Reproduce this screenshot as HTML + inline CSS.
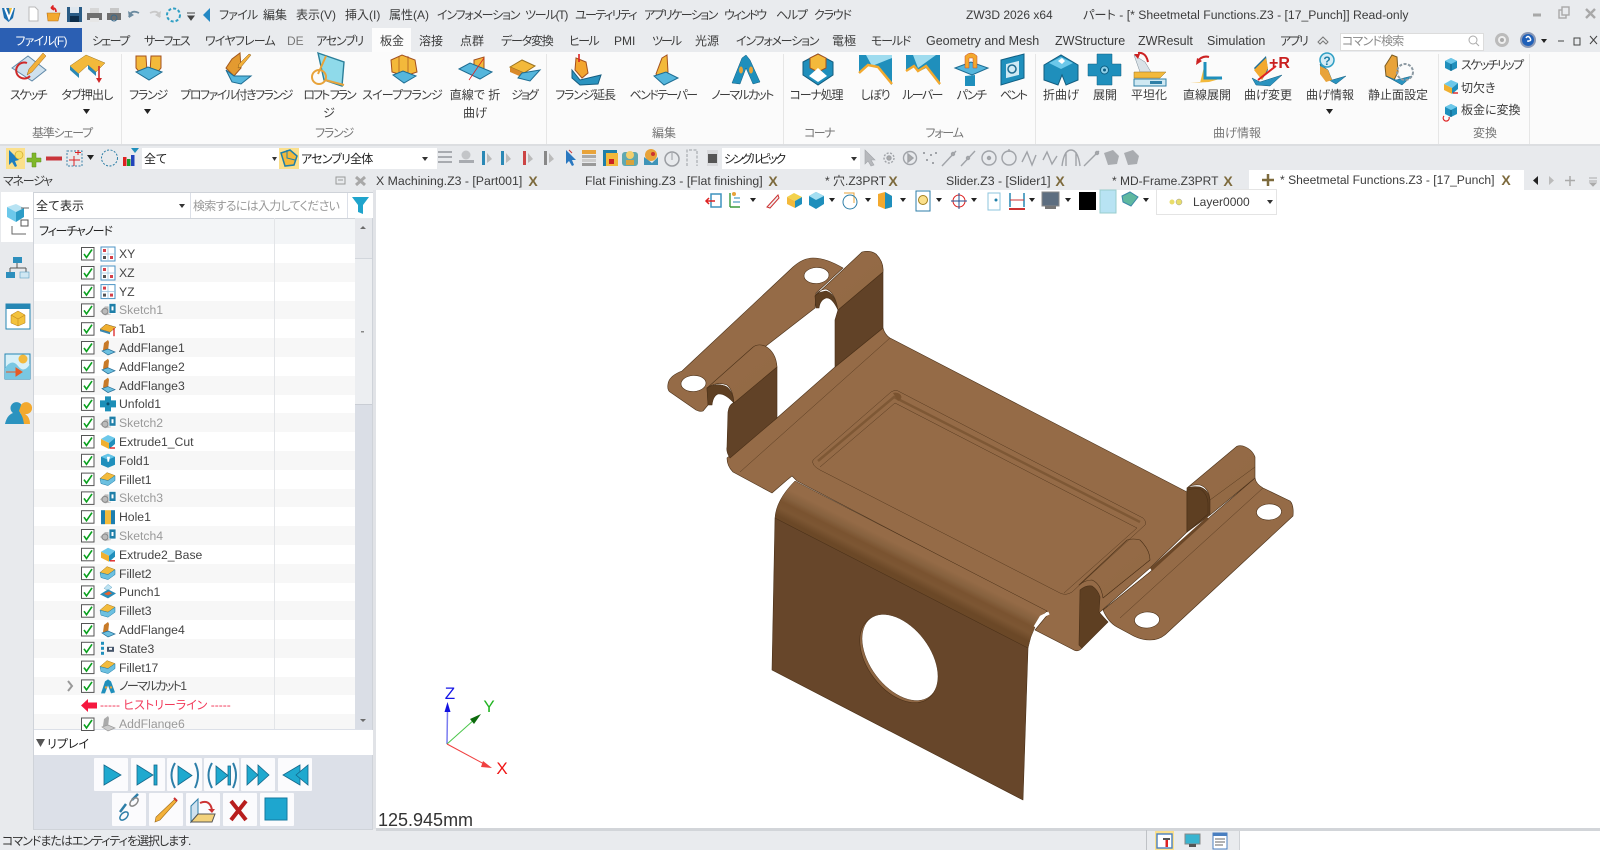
<!DOCTYPE html>
<html lang="ja"><head><meta charset="utf-8"><title>ZW3D</title>
<style>
html,body{margin:0;padding:0}
body{width:1600px;height:850px;position:relative;overflow:hidden;background:#e8eaed;font-family:"Liberation Sans","Noto Sans CJK JP",sans-serif;font-size:12px;color:#3c3c3c;font-feature-settings:"palt"}
.b{position:absolute}
.c,.l{position:absolute;white-space:nowrap;line-height:1}
.c{transform:translate(-50%,-50%)}
.l{transform:translateY(-50%)}
.g{color:#777}
.x{font-weight:bold;color:#7d6a3c;font-size:14px}
.r{position:absolute;left:34px;width:321px;height:18.8px}
.n{position:absolute;left:119px;white-space:nowrap;line-height:1;transform:translateY(-50%);font-size:12.2px;color:#444}
.d{color:#9a9a9a}
.bt{position:absolute;background:#fbfbfd;border-radius:1px}
.k1{letter-spacing:-.8px}.k2{letter-spacing:-1.2px}.k3{letter-spacing:-1.6px}.k4{letter-spacing:-2px}
svg{position:absolute;left:0;top:0;overflow:visible}
</style></head><body>

<!-- backgrounds -->
<div class="b" style="left:0;top:0;width:1600px;height:52px;background:#e9ebee"></div>
<div class="b" style="left:0;top:28px;width:82px;height:24px;background:#2b5fb3"></div>
<div class="b" style="left:372px;top:28px;width:39px;height:25px;background:#fcfcfc"></div>
<div class="b" style="left:0;top:52px;width:1600px;height:92px;background:#fbfbfb"></div>
<div class="b" style="left:0;top:144px;width:1600px;height:2px;background:#dcdee1"></div>
<div class="b" style="left:121px;top:54px;width:1px;height:90px;background:#e6e6e6"></div>
<div class="b" style="left:546px;top:54px;width:1px;height:90px;background:#e6e6e6"></div>
<div class="b" style="left:783px;top:54px;width:1px;height:90px;background:#e6e6e6"></div>
<div class="b" style="left:1035px;top:54px;width:1px;height:90px;background:#e6e6e6"></div>
<div class="b" style="left:1438px;top:54px;width:1px;height:90px;background:#e6e6e6"></div>
<div class="b" style="left:1529px;top:54px;width:1px;height:90px;background:#e6e6e6"></div>
<div class="b" style="left:1340px;top:33px;width:144px;height:18px;background:#fff;border:1px solid #dcdcdc;box-sizing:border-box"></div>

<!-- toolbar combos -->
<div class="b" style="left:6px;top:148px;width:19px;height:21px;background:#fbe08c"></div>
<div class="b" style="left:142px;top:148px;width:137px;height:21px;background:#fff"></div>
<div class="b" style="left:279px;top:148px;width:20px;height:21px;background:#fbe08c"></div>
<div class="b" style="left:299px;top:148px;width:138px;height:21px;background:#fff"></div>
<div class="b" style="left:722px;top:148px;width:138px;height:21px;background:#fff"></div>

<!-- viewport -->
<div class="b" style="left:376px;top:190px;width:1224px;height:639px;background:#fff"></div>
<div class="b" style="left:373px;top:190px;width:3px;height:639px;background:#e1e3e7"></div>
<div class="b" style="left:1249px;top:170px;width:275px;height:22px;background:#fff"></div>
<div class="b" style="left:1156px;top:189px;width:121px;height:26px;background:#fff;border:1px solid #e4e4e4;box-sizing:border-box"></div>
<div class="b" style="left:376px;top:828px;width:1224px;height:2px;background:#d2d5d9"></div>

<!-- manager panel -->
<div class="b" style="left:1px;top:192px;width:33px;height:50px;background:#fff"></div>
<div class="b" style="left:33px;top:192px;width:340px;height:638px;background:#dce0e8;border:1px solid #cfd3d9;box-sizing:border-box"></div>
<div class="b" style="left:34px;top:193px;width:156px;height:25px;background:#fff"></div>
<div class="b" style="left:191px;top:193px;width:156px;height:25px;background:#fff"></div>
<div class="b" style="left:348px;top:193px;width:25px;height:25px;background:#fff"></div>
<div class="b" style="left:34px;top:218px;width:321px;height:26px;background:#f3f5f7;border-top:1px solid #cfd3d9;box-sizing:border-box"></div>
<div class="b" style="left:34px;top:244px;width:321px;height:485px;background:#fff;overflow:hidden">
<div class="r" style="left:0;top:19px;background:#f7f7f7"></div>
<div class="r" style="left:0;top:56.6px;background:#f7f7f7"></div>
<div class="r" style="left:0;top:94.2px;background:#f7f7f7"></div>
<div class="r" style="left:0;top:131.8px;background:#f7f7f7"></div>
<div class="r" style="left:0;top:169.4px;background:#f7f7f7"></div>
<div class="r" style="left:0;top:207px;background:#f7f7f7"></div>
<div class="r" style="left:0;top:244.6px;background:#f7f7f7"></div>
<div class="r" style="left:0;top:282.2px;background:#f7f7f7"></div>
<div class="r" style="left:0;top:319.8px;background:#f7f7f7"></div>
<div class="r" style="left:0;top:357.4px;background:#f7f7f7"></div>
<div class="r" style="left:0;top:395px;background:#f7f7f7"></div>
<div class="r" style="left:0;top:432.6px;background:#f7f7f7"></div>
<div class="r" style="left:0;top:470.2px;background:#f7f7f7"></div>
</div>
<div class="b" style="left:274px;top:218px;width:1px;height:511px;background:#e3e5e8"></div>
<div class="b" style="left:355px;top:218px;width:17px;height:40px;background:#e6e8ec"></div>
<div class="b" style="left:355px;top:258px;width:17px;height:147px;background:#eceef1;border-top:1px solid #d2d6dc;border-bottom:1px solid #c9cdd4;box-sizing:border-box"></div>
<div class="b" style="left:355px;top:405px;width:17px;height:324px;background:#dadee6"></div>
<div class="b" style="left:34px;top:730px;width:339px;height:25px;background:#fff"></div>
<div class="bt" style="left:94px;top:758px;width:34px;height:33px"></div>
<div class="bt" style="left:131px;top:758px;width:34px;height:33px"></div>
<div class="bt" style="left:167px;top:758px;width:35px;height:33px"></div>
<div class="bt" style="left:204px;top:758px;width:35px;height:33px"></div>
<div class="bt" style="left:241px;top:758px;width:34px;height:33px"></div>
<div class="bt" style="left:278px;top:758px;width:34px;height:33px"></div>
<div class="bt" style="left:112px;top:793px;width:34px;height:33px"></div>
<div class="bt" style="left:149px;top:793px;width:34px;height:33px"></div>
<div class="bt" style="left:186px;top:793px;width:34px;height:33px"></div>
<div class="bt" style="left:223px;top:793px;width:34px;height:33px"></div>
<div class="bt" style="left:260px;top:793px;width:34px;height:33px"></div>

<!-- status bar -->
<div class="b" style="left:0;top:830px;width:1600px;height:20px;background:#e9ebee"></div>
<div class="b" style="left:376px;top:830px;width:1224px;height:1px;background:#d2d5d9"></div>
<div class="b" style="left:1146px;top:830px;width:1px;height:20px;background:#bfc2c6"></div>
<div class="b" style="left:1155px;top:831px;width:19px;height:19px;background:#fbe08c"></div>
<div class="b" style="left:1239px;top:831px;width:361px;height:19px;background:#fff;border-left:1px solid #cfd2d6;box-sizing:border-box"></div>

<!-- title menu -->
<span class="l k1" style="left:219px;top:15px">ファイル</span>
<span class="l" style="left:263px;top:15px">編集</span>
<span class="l" style="left:296px;top:15px">表示(V)</span>
<span class="l" style="left:345px;top:15px">挿入(I)</span>
<span class="l" style="left:389px;top:15px">属性(A)</span>
<span class="l k2" style="left:437px;top:15px">インフォメーション</span>
<span class="l k2" style="left:525px;top:15px">ツール(T)</span>
<span class="l k3" style="left:575px;top:15px">ユーティリティ</span>
<span class="l k3" style="left:644px;top:15px">アプリケーション</span>
<span class="l k4" style="left:724px;top:15px">ウィンドウ</span>
<span class="l k2" style="left:776px;top:15px">ヘルプ</span>
<span class="l k2" style="left:814px;top:15px">クラウド</span>
<span class="l" style="left:966px;top:15px;font-size:12px">ZW3D 2026 x64</span>
<span class="l" style="left:1083px;top:15px;font-size:12.2px">パート - [* Sheetmetal Functions.Z3 - [17_Punch]] Read-only</span>

<!-- tabs -->
<span class="c k1" style="left:41px;top:41px;color:#fff">ファイル(F)</span>
<span class="l k3" style="left:92px;top:41px">シェープ</span>
<span class="l k3" style="left:144px;top:41px">サーフェス</span>
<span class="l k1" style="left:205px;top:41px">ワイヤフレーム</span>
<span class="l g" style="left:287px;top:41px">DE</span>
<span class="l k2" style="left:316px;top:41px">アセンブリ</span>
<span class="l" style="left:380px;top:41px">板金</span>
<span class="l" style="left:419px;top:41px">溶接</span>
<span class="l" style="left:460px;top:41px">点群</span>
<span class="l k2" style="left:501px;top:41px">データ変換</span>
<span class="l k3" style="left:569px;top:41px">ヒール</span>
<span class="l" style="left:614px;top:41px">PMI</span>
<span class="l k4" style="left:652px;top:41px">ツール</span>
<span class="l" style="left:695px;top:41px">光源</span>
<span class="l k2" style="left:736px;top:41px">インフォメーション</span>
<span class="l" style="left:832px;top:41px">電極</span>
<span class="l k2" style="left:871px;top:41px">モールド</span>
<span class="l" style="left:926px;top:41px;font-size:12.5px">Geometry and Mesh</span>
<span class="l" style="left:1055px;top:41px;font-size:12.5px">ZWStructure</span>
<span class="l" style="left:1138px;top:41px;font-size:12.5px">ZWResult</span>
<span class="l" style="left:1207px;top:41px;font-size:12.5px">Simulation</span>
<span class="l k3" style="left:1280px;top:41px">アプリ</span>
<span class="l k1" style="left:1342px;top:41px;color:#8a8a8a">コマンド検索</span>

<!-- ribbon labels -->
<span class="c k3" style="left:28px;top:95px">スケッチ</span>
<span class="c k1" style="left:87px;top:95px">タブ押出し</span>
<span class="c k2" style="left:148px;top:95px">フランジ</span>
<span class="c" style="left:236px;top:95px;letter-spacing:-1.5px">プロファイル付きフランジ</span>
<span class="c k4" style="left:329px;top:95px">ロフト フラン</span>
<span class="c" style="left:329px;top:113px">ジ</span>
<span class="c k1" style="left:402px;top:95px">スイープフランジ</span>
<span class="c" style="left:475px;top:95px">直線で 折</span>
<span class="c" style="left:475px;top:113px">曲げ</span>
<span class="c k4" style="left:524px;top:95px">ジョグ</span>
<span class="c k2" style="left:585px;top:95px">フランジ延長</span>
<span class="c k3" style="left:663px;top:95px">ベンドテーパー</span>
<span class="c k3" style="left:742px;top:95px">ノーマルカット</span>
<span class="c k2" style="left:816px;top:95px">コーナ処理</span>
<span class="c k2" style="left:875px;top:95px">しぼり</span>
<span class="c k3" style="left:922px;top:95px">ルーバー</span>
<span class="c k3" style="left:971px;top:95px">パンチ</span>
<span class="c k4" style="left:1013px;top:95px">ベント</span>
<span class="c" style="left:1061px;top:95px">折曲げ</span>
<span class="c" style="left:1105px;top:95px">展開</span>
<span class="c" style="left:1149px;top:95px">平坦化</span>
<span class="c" style="left:1207px;top:95px">直線展開</span>
<span class="c" style="left:1268px;top:95px">曲げ変更</span>
<span class="c" style="left:1330px;top:95px">曲げ情報</span>
<span class="c" style="left:1398px;top:95px">静止面設定</span>
<span class="l k3" style="left:1461px;top:65px">スケッチリップ</span>
<span class="l" style="left:1461px;top:88px">切欠き</span>
<span class="l" style="left:1461px;top:110px">板金に変換</span>
<span class="c g k2" style="left:62px;top:133px">基準シェープ</span>
<span class="c g k2" style="left:334px;top:133px">フランジ</span>
<span class="c g" style="left:664px;top:133px">編集</span>
<span class="c g k3" style="left:819px;top:133px">コーナ</span>
<span class="c g k2" style="left:944px;top:133px">フォーム</span>
<span class="c g" style="left:1237px;top:133px">曲げ情報</span>
<span class="c g" style="left:1485px;top:133px">変換</span>

<!-- toolbar combo text -->
<span class="l" style="left:144px;top:159px;color:#222">全て</span>
<span class="l k1" style="left:301px;top:159px;color:#222">アセンブリ全体</span>
<span class="l" style="left:724px;top:159px;color:#222;letter-spacing:-2.2px">シングルピック</span>

<!-- manager text -->
<span class="l k2" style="left:3px;top:181px">マネージャ</span>
<span class="l" style="left:36px;top:206px;font-feature-settings:normal;color:#222">全て表示</span>
<span class="l" style="left:193px;top:206px;color:#999;letter-spacing:-.7px">検索するには入力してください</span>
<span class="l k2" style="left:39px;top:231px;color:#222">フィーチャノード</span>
<span class="l" style="left:47px;top:744px;color:#222">リプレイ</span>
<span class="l" style="left:2px;top:841px;color:#333;letter-spacing:-1px">コマンドまたはエンティティを選択します.</span>

<!-- tree text -->
<span class="n" style="top:254px">XY</span>
<span class="n" style="top:273px">XZ</span>
<span class="n" style="top:291.6px">YZ</span>
<span class="n d" style="top:310.4px">Sketch1</span>
<span class="n" style="top:329.2px">Tab1</span>
<span class="n" style="top:348px">AddFlange1</span>
<span class="n" style="top:366.8px">AddFlange2</span>
<span class="n" style="top:385.6px">AddFlange3</span>
<span class="n" style="top:404.4px">Unfold1</span>
<span class="n d" style="top:423.2px">Sketch2</span>
<span class="n" style="top:442px">Extrude1_Cut</span>
<span class="n" style="top:460.8px">Fold1</span>
<span class="n" style="top:479.6px">Fillet1</span>
<span class="n d" style="top:498.4px">Sketch3</span>
<span class="n" style="top:517.2px">Hole1</span>
<span class="n d" style="top:536px">Sketch4</span>
<span class="n" style="top:554.8px">Extrude2_Base</span>
<span class="n" style="top:573.6px">Fillet2</span>
<span class="n" style="top:592.4px">Punch1</span>
<span class="n" style="top:611.2px">Fillet3</span>
<span class="n" style="top:630px">AddFlange4</span>
<span class="n" style="top:648.8px">State3</span>
<span class="n" style="top:667.6px">Fillet17</span>
<span class="n" style="top:686.4px;letter-spacing:-1.8px">ノーマルカット1</span>
<span class="l" style="left:100px;top:705.2px;color:#f23a5a">----- ヒストリーライン -----</span>
<div class="b" style="left:34px;top:717px;width:321px;height:12px;overflow:hidden"><span class="n d" style="left:85px;top:7px">AddFlange6</span></div>

<!-- viewport tabs -->
<span class="l" style="left:376px;top:181px;font-size:12.3px">X Machining.Z3 - [Part001]</span><span class="c x" style="left:533px;top:181px">X</span>
<span class="l" style="left:585px;top:181px;font-size:12.3px">Flat Finishing.Z3 - [Flat finishing]</span><span class="c x" style="left:773px;top:181px">X</span>
<span class="l" style="left:825px;top:181px">* 穴.Z3PRT</span><span class="c x" style="left:893px;top:181px">X</span>
<span class="l" style="left:946px;top:181px;font-size:12.3px">Slider.Z3 - [Slider1]</span><span class="c x" style="left:1060px;top:181px">X</span>
<span class="l" style="left:1112px;top:181px">* MD-Frame.Z3PRT</span><span class="c x" style="left:1228px;top:181px">X</span>
<span class="l" style="left:1280px;top:180px;font-size:12.1px">* Sheetmetal Functions.Z3 - [17_Punch]</span><span class="c x" style="left:1506px;top:180px">X</span>
<span class="l" style="left:1193px;top:202px">Layer0000</span>
<span class="l" style="left:378px;top:820px;font-size:18px;color:#333">125.945mm</span>
<svg width="1600" height="850" viewBox="0 0 1600 850" style="pointer-events:none">
<defs>
<linearGradient id="bend" gradientUnits="userSpaceOnUse" x1="815" y1="492" x2="798" y2="526">
<stop offset="0" stop-color="#956b47"/><stop offset=".25" stop-color="#956b47"/><stop offset=".45" stop-color="#87623f"/><stop offset=".62" stop-color="#7a5330"/><stop offset=".8" stop-color="#7c5633"/><stop offset="1" stop-color="#6b4827"/></linearGradient>
<linearGradient id="hump" x1="0" y1="0" x2="1" y2="1"><stop offset="0" stop-color="#956b47"/><stop offset=".7" stop-color="#936a45"/><stop offset="1" stop-color="#7a5534"/></linearGradient>
<symbol id="plane" viewBox="0 0 16 16" overflow="visible"><rect x="1" y="1" width="14" height="14" fill="#fff" stroke="#4b93c4" stroke-width="1"/><path d="M1 8H15M8 1V15" stroke="#9cc6e2" stroke-width=".8"/><rect x="3" y="3" width="3" height="3" fill="#d5404a"/><rect x="10" y="10" width="3" height="3" fill="#d5404a"/><rect x="3" y="10" width="3" height="3" fill="#555"/></symbol>
<symbol id="sk" viewBox="0 0 16 16" overflow="visible"><path d="M0 9 5 4 11 4 11 12 5 13Z" fill="#bbb"/><circle cx="5" cy="9" r="3" fill="none" stroke="#888"/><rect x="9" y="1" width="7" height="10" fill="#1f7fa8" stroke="#fff" stroke-width=".8"/><rect x="11.5" y="4" width="2" height="4" fill="#fff"/></symbol>
<symbol id="tab" viewBox="0 0 16 16" overflow="visible"><path d="M0 8 6 3 16 6 10 11Z" fill="#f0b030" stroke="#7a5a20" stroke-width=".5"/><path d="M0 8 10 11 10 13 0 10Z" fill="#3a88b0"/><path d="M14 7V15" stroke="#d22" stroke-width="1.3"/></symbol>
<symbol id="fl" viewBox="0 0 16 16" overflow="visible"><path d="M3 10 4 3 8 0 9 2 8 11Z" fill="#c87a28"/><path d="M2 11 8 9 15 12 8 15Z" fill="#6cc0e0" stroke="#276e96" stroke-width=".7"/></symbol>
<symbol id="flg" viewBox="0 0 16 16" overflow="visible"><path d="M3 10 4 3 8 0 9 2 8 11Z" fill="#aaa"/><path d="M2 11 8 9 15 12 8 15Z" fill="#ccc" stroke="#999" stroke-width=".7"/></symbol>
<symbol id="un" viewBox="0 0 16 16" overflow="visible"><path d="M5 0H11V4H16V11H11V15H5V11H0V4H5Z" fill="#1d8fb8"/><circle cx="8" cy="7.5" r="1.5" fill="#0b4e6e"/></symbol>
<symbol id="ex" viewBox="0 0 16 16" overflow="visible"><path d="M1 5 8 1 15 4 9 9Z" fill="#6cc8ea"/><path d="M1 5 9 9 9 15 1 11Z" fill="#f0b030"/><path d="M9 9 15 4 15 10 9 15Z" fill="#1f8fbc"/><path d="M10 14 15 14" stroke="#d22" stroke-width="1.4"/></symbol>
<symbol id="fo" viewBox="0 0 16 16" overflow="visible"><path d="M1 4 8 1 15 4 15 12 8 15 1 12Z" fill="#1f8fbc"/><path d="M1 4 8 7 15 4 8 1Z" fill="#66c5e8"/><path d="M7 4 10 4 9 9 7.5 9Z" fill="#fff"/></symbol>
<symbol id="fi" viewBox="0 0 16 16" overflow="visible"><path d="M0 7 7 1 15 4 8 9Z" fill="#f3bb3c" stroke="#a77a1c" stroke-width=".5"/><path d="M0 7 8 9 15 4 15 9 8 14 1 12Z" fill="#6cc0e0" stroke="#1f7ca8" stroke-width=".5"/></symbol>
<symbol id="ho" viewBox="0 0 16 16" overflow="visible"><rect x="1" y="1" width="4" height="14" fill="#1d7fb0"/><rect x="5" y="1" width="6" height="14" fill="#f3bb3c"/><rect x="11" y="1" width="4" height="14" fill="#1d7fb0"/></symbol>
<symbol id="pu" viewBox="0 0 16 16" overflow="visible"><path d="M4 4 8 0 12 3 8 6Z" fill="#bfe4f3" stroke="#6aa8c6" stroke-width=".5"/><path d="M0 10 8 5 16 9 8 14Z" fill="#2a8db8"/><path d="M4 9.5 9 7 12 9 8 11Z" fill="#e8622a"/></symbol>
<symbol id="st" viewBox="0 0 16 16" overflow="visible"><rect x="1" y="1" width="3" height="3" fill="#1f8fbc"/><rect x="1" y="6" width="3" height="3" fill="#1f8fbc"/><rect x="1" y="11" width="3" height="3" fill="#1f8fbc"/><rect x="7" y="6" width="7" height="5" fill="#44546a"/><rect x="9" y="7" width="3" height="2" fill="#fff"/></symbol>
<symbol id="nc" viewBox="0 0 16 16" overflow="visible"><path d="M1 15 5 3 8 1 11 3 15 14 11 15 8 7 5 15Z" fill="#1f8fbc"/><circle cx="6" cy="9" r="1.2" fill="#e8a33a"/><circle cx="11" cy="9" r="1.2" fill="#e8a33a"/></symbol>
<symbol id="cb" viewBox="0 0 14 14" overflow="visible"><rect x=".5" y=".5" width="12.5" height="12.5" fill="#fff" stroke="#555" stroke-width="1"/><path d="M3 7 5.5 10.5 11 2.5" fill="none" stroke="#0aa01e" stroke-width="1.6"/></symbol>
<symbol id="bi" viewBox="0 0 16 16" overflow="visible"><path d="M2 5 8 2 14 5 14 12 8 15 2 12Z" fill="#1f8fbc"/><path d="M2 5 8 8 14 5 8 2Z" fill="#6cc8ea"/><path d="M8 8V15" stroke="#0e5f84"/></symbol>
</defs>

<!-- title icons -->
<path d="M2 8H15L13 18 8.5 22 4 18Z" fill="#1c6fb0"/><path d="M5 8 9 18 13 8" fill="none" stroke="#fff" stroke-width="2"/><path d="M9 8h3l-2 6z" fill="#f3c33c"/>
<path d="M29 7H35L38 10V21H29Z" fill="#fff" stroke="#b9b9b9"/>
<path d="M47 13H60L58 21H48Z" fill="#f3a92e" stroke="#b5701a" stroke-width=".6"/><path d="M56 12 Q56 7 51 8M51 8l2.5-2.5M51 8l3 2" stroke="#d22" stroke-width="1.6" fill="none"/>
<rect x="67" y="7" width="15" height="15" fill="#2a5c86"/><rect x="70" y="7" width="9" height="6" fill="#dfe7ee"/><rect x="70" y="16" width="9" height="6" fill="#0e2e4b"/>
<rect x="87" y="13" width="15" height="7" fill="#6f6f6f"/><rect x="90" y="8" width="9" height="5" fill="#d7d7d7"/><rect x="90" y="18" width="9" height="4" fill="#e6e6e6"/>
<rect x="107" y="13" width="14" height="7" fill="#6f6f6f"/><rect x="110" y="8" width="9" height="5" fill="#c7c7c7"/><circle cx="114" cy="18" r="3" fill="none" stroke="#3c6a8a"/>
<path d="M129 17Q131 9 139 13" fill="none" stroke="#6c8ba0" stroke-width="1.8"/><path d="M128 11l1 7 5-3z" fill="#6c8ba0"/>
<path d="M160 17Q158 9 150 13" fill="none" stroke="#c9c9c9" stroke-width="1.8"/><path d="M161 11l-1 7-5-3z" fill="#c9c9c9"/>
<circle cx="173.500" cy="15" r="6.500" fill="none" stroke="#2f9fc4" stroke-width="2" stroke-dasharray="3 2"/>
<path d="M187 13h8M188 16h6l-3 4z" stroke="#444" fill="#444"/><path d="M210 8V22L203 15Z" fill="#2388c4"/>
<path d="M1533 15h8" stroke="#a8a8a8" stroke-width="3" fill="none"/><rect x="1559" y="10" width="7" height="8" fill="none" stroke="#a8a8a8" stroke-width="1.4"/><rect x="1562" y="7" width="7" height="8" fill="#e9ebee" stroke="#a8a8a8" stroke-width="1.4"/><path d="M1586 9l9 9m0-9-9 9" stroke="#a8a8a8" stroke-width="2.400"/>

<!-- top right of tab row -->
<path d="M1318 42l5-5 5 5-2 2-3-3-3 3z" fill="none" stroke="#777"/><circle cx="1473" cy="40" r="4" fill="none" stroke="#aaa"/><path d="M1476 43l3 3" stroke="#aaa"/>
<circle cx="1502" cy="40" r="7" fill="#bbb"/><circle cx="1502" cy="40" r="4" fill="#eee"/><circle cx="1502" cy="40" r="2" fill="#aaa"/>
<circle cx="1528" cy="40" r="8" fill="#8a98b5"/><circle cx="1528" cy="40" r="6" fill="#1e5fb8"/><path d="M1526 38q2-3 4 0t-2 3v1" stroke="#fff" fill="none" stroke-width="1.500"/>
<path d="M1541 39h6l-3 4z" fill="#222"/><path d="M1558 41h6" stroke="#444"/><rect x="1574" y="38" width="6" height="7" fill="none" stroke="#444"/><path d="M1590 36l7 8m0-8-7 8" stroke="#444"/>

<!-- ribbon icons -->
<g><path d="M12 68 28 56 46 70 32 81Z" fill="#cfe1ee" stroke="#5f88a8"/><path d="M27 63a8 8 0 1 0 3 13" fill="none" stroke="#cf2a2a" stroke-width="2"/><path d="M43 53 46 56 32 72 27 75 29 69Z" fill="#f3b13a" stroke="#a0661a" stroke-width=".5"/></g>
<g><path d="M70 66 86 55 105 63 96 72 88 65 78 74Z" fill="#f3b93b" stroke="#9b7320" stroke-width=".5"/><path d="M70 66 79 74 79 78 70 70Z" fill="#2a88b5"/><path d="M88 65 96 72 96 76 88 69Z" fill="#2a88b5"/><path d="M99 66V80" stroke="#cf2a2a" stroke-width="1.600"/><path d="M96 78h6l-3 5z" fill="#cf2a2a"/></g>
<g><path d="M136 56 146 56 147 72 141 74 136 68Z" fill="#f3b93b" stroke="#a3501e"/><path d="M161 56 151 56 150 72 156 74 161 68Z" fill="#f3b93b" stroke="#a3501e"/><path d="M136 72 148 67 162 72 149 80Z" fill="#55b6dc" stroke="#1d6c92"/></g>
<g><path d="M226 68 232 59 240 53 241 68 234 76Z" fill="#e39a30" stroke="#a3581e"/><path d="M226 70 234 76 251 76 241 84 232 82Z" fill="#55b6dc" stroke="#1d6c92"/><path d="M249 54 251 55 241 67 238 68 239 64Z" fill="#f3b13a" stroke="#8a5a1a" stroke-width=".5"/></g>
<g><path d="M318 53 344 62 342 86 324 80Z" fill="#8fdaea" stroke="#2b7f9a" stroke-width="1.400"/><path d="M326 56 318 74" stroke="#e8a33a" stroke-width="2"/><circle cx="319" cy="77" r="7" fill="none" stroke="#e8a33a" stroke-width="2"/><path d="M325 80 344 85" stroke="#e8a33a" stroke-width="2"/></g>
<g><path d="M391 60 402 55 415 60 417 72 405 76 392 72Z" fill="#f3b93b" stroke="#a3501e"/><path d="M399 56V74M408 56V74" stroke="#a3501e" stroke-width=".7"/><path d="M393 75 403 71 416 76 404 83Z" fill="#55b6dc" stroke="#1d6c92"/></g>
<g><path d="M474 60 484 57 484 72 474 75Z" fill="#f3b93b" stroke="#a3501e"/><path d="M459 69 470 63 492 72 480 79Z" fill="#55b6dc" stroke="#1d6c92"/><path d="M469 80 484 58" stroke="#d22" stroke-width=".8"/></g>
<g><path d="M510 67 522 60 535 66 524 73Z" fill="#f3b93b" stroke="#9b7320"/><path d="M510 67 524 73 524 78 510 72Z" fill="#d98a2a"/><path d="M522 73 540 70 530 81 518 78Z" fill="#55b6dc" stroke="#1d6c92"/></g>
<g><path d="M576 58 586 62 588 73 582 78 575 70Z" fill="#f3a52e" stroke="#a3501e"/><path d="M572 70 580 80 601 75 598 84 580 85 572 78Z" fill="#2a93bf" stroke="#165d80"/><path d="M579 54V62" stroke="#d22" stroke-width="1.600"/></g>
<g><path d="M662 58 667 55 668 72 660 78 656 74Z" fill="#f3b93b" stroke="#a3501e"/><path d="M654 76 666 72 678 78 664 85Z" fill="#55b6dc" stroke="#1d6c92"/></g>
<g><path d="M732 83 742 58 746 55 750 60 760 82 753 84 746 68 740 84Z" fill="#1f8fbc" stroke="#135c7e" stroke-width=".5"/><ellipse cx="741" cy="70" rx="2" ry="3.500" fill="#e8a33a"/><ellipse cx="751" cy="70" rx="2" ry="3.500" fill="#e8a33a"/></g>
<g><path d="M803 62 818 54 833 62 833 75 818 85 803 75Z" fill="#1f8fbc" stroke="#135c7e"/><path d="M810 58 818 54 826 58 826 68 818 72 810 68Z" fill="#f3b93b" stroke="#a3501e"/><path d="M809 76 818 68 827 76 818 82Z" fill="#fff"/></g>
<g><path d="M859 55H892V85L878 68 868 66 859 73Z" fill="#1f8fbc"/><path d="M866 55H892V58L872 66Z" fill="#9fdcef"/><path d="M859 73 868 65 878 67 892 84" fill="none" stroke="#f3a92e" stroke-width="2.500"/></g>
<g><path d="M906 55H940V85L926 68 918 72 914 67 906 71Z" fill="#1f8fbc"/><path d="M913 55H936L918 68Z" fill="#9fdcef"/><path d="M906 71 914 66 918 71 926 66 940 84" fill="none" stroke="#f3a92e" stroke-width="2.500"/></g>
<g><path d="M955 68 971 62 988 68 972 75Z" fill="#55b6dc" stroke="#1d6c92"/><path d="M965 76V86H975V75Z" fill="#1f8fbc"/><path d="M965 56Q971 50 977 56V68H973V58H969V68H965Z" fill="#f3a92e" stroke="#c9492a" stroke-width=".5"/></g>
<g><path d="M1001 60 1024 54V78L1001 85Z" fill="#1f8fbc" stroke="#0e5f84"/><rect x="1006" y="62" width="13" height="14" fill="#cfeaf4" transform="skewY(-14) translate(0,253)"/><circle cx="1012" cy="69" r="4" fill="none" stroke="#1d6c92" stroke-width="1.500"/></g>
<g><path d="M1044 65 1061 55 1078 65 1078 80 1066 85 1062 75 1058 85 1044 80Z" fill="#1f8fbc" stroke="#135c7e"/><path d="M1049 63 1061 57 1073 63 1061 69Z" fill="#6cc8ea"/><path d="M1058 61 1062 58 1065 61 1062 64Z" fill="#fff"/></g>
<g><path d="M1097 54H1112V64H1121V76H1112V85H1097V76H1088V64H1097Z" fill="#1f8fbc" stroke="#135c7e" stroke-width=".5"/><circle cx="1104.500" cy="70" r="4" fill="#8fd0e8" stroke="#0e5f84"/><circle cx="1104.500" cy="70" r="1.500" fill="#0e5f84"/></g>
<g><path d="M1134 55 1145 62 1151 72 1140 72Z" fill="#d9e2e8" stroke="#7a8a96" stroke-width=".5"/><path d="M1138 53Q1146 52 1148 62" stroke="#c22" stroke-width="2" fill="none"/><path d="M1134 54l6 0-2 5z" fill="#c22"/><path d="M1134 72H1166L1160 78H1134Z" fill="#f3b93b" stroke="#9b7320" stroke-width=".5"/><rect x="1134" y="79" width="32" height="7" fill="#cfe8f2" stroke="#2f7fa6"/><rect x="1150" y="81" width="12" height="3" fill="#2f7fa6"/></g>
<g><path d="M1197 62Q1202 55 1209 57" stroke="#c22" stroke-width="2" fill="none"/><path d="M1196 65l1-7 5 3z" fill="#c22"/><path d="M1205 63V78H1223L1209 82 1190 83H1200Z" fill="#f3b93b"/><path d="M1205 62V78H1222" stroke="#1f8fbc" stroke-width="3" fill="none"/></g>
<g><path d="M1254 68 1266 56 1268 70 1262 80Z" fill="#1f6f98"/><path d="M1252 78 1260 82 1282 75 1270 86 1256 85Z" fill="#2a93bf" stroke="#135c7e" stroke-width=".5"/><path d="M1254 70 1262 80 1268 68 1266 58" fill="#f3a92e"/><path d="M1258 80 1276 66" stroke="#d22" stroke-width="2"/></g>
<text x="1269" y="68" font-family="'Liberation Sans',sans-serif" font-size="16" font-weight="bold" fill="#c91f1f">+R</text>
<g><path d="M1320 64 1328 70 1332 80 1346 76 1336 84 1322 76Z" fill="#2a93bf" stroke="#135c7e" stroke-width=".5"/><path d="M1320 66 1328 70 1332 80 1326 82 1320 74Z" fill="#e8a33a"/><circle cx="1327" cy="60" r="7" fill="#d6ecf5" stroke="#2f9fc4" stroke-width="1.500"/></g>
<text x="1327" y="65" text-anchor="middle" font-family="'Liberation Sans',sans-serif" font-size="12" font-weight="bold" fill="#1f7fa8">?</text>
<g><path d="M1385 66 1392 55 1397 57 1398 72 1394 80 1386 76Z" fill="#e8a33a" stroke="#7a5a20"/><path d="M1386 76 1396 80 1412 76 1402 85Z" fill="#2a93bf" stroke="#135c7e" stroke-width=".5"/><circle cx="1405" cy="72" r="8" fill="none" stroke="#8d9aa3" stroke-width="2" stroke-dasharray="3 1.500"/></g>
<use href="#bi" x="1443" y="56" width="16" height="16"/><use href="#ex" x="1443" y="79" width="16" height="16"/><use href="#bi" x="1443" y="102" width="16" height="16"/>
<path d="M1444 116a3 3 0 1 0 5 1" fill="none" stroke="#d22" stroke-width="1.200"/>
<path d="M83 109h7l-3.500 5zM144 109h7l-3.500 5zM1326 109h7l-3.500 5z" fill="#222"/>

<!-- toolbar icons -->
<path d="M9 150V165L12 162 15 167 17 166 15 161 19 160Z" fill="#1f7fc0"/><circle cx="19" cy="155" r="4" fill="#f7e06c" stroke="#c8a020" stroke-width=".6"/>
<path d="M32 153h4v5h5v4h-5v5h-4v-5h-5v-4h5z" fill="#7fb82a" stroke="#5a8a1a" stroke-width=".5"/>
<rect x="46" y="156.500" width="16" height="4" fill="#c9343a"/>
<rect x="67" y="151" width="15" height="15" fill="none" stroke="#3a80a8" stroke-dasharray="2 1.500"/><path d="M74 156V166M69 160H80M78 150V155M75 152.500H81" stroke="#d22"/>
<path d="M87 155h7l-3.500 5z" fill="#222"/><circle cx="109.500" cy="158" r="8" fill="none" stroke="#2f7fa6" stroke-dasharray="2 1.500"/>
<rect x="123" y="157" width="3.500" height="9" fill="#d22"/><rect x="127" y="159" width="3.500" height="7" fill="#1a9a2a"/><rect x="131" y="155" width="3.500" height="11" fill="#2244bb"/><path d="M131 148h8l-4 5z" fill="#1f8fbc"/>
<path d="M272 157h5l-2.500 4z M422 157h6l-3 4z M851 157h6l-3 4z" fill="#333"/>
<path d="M281 153 290 150 297 156 294 165 285 166Z" fill="#f3b93b" stroke="#1f7fa8" stroke-width="1.500"/><path d="M287 150v8l8 2" stroke="#1f7fa8" fill="none"/>
<g fill="#a8abb0"><rect x="438" y="151" width="14" height="2"/><rect x="438" y="156" width="14" height="2"/><rect x="438" y="161" width="14" height="2"/><rect x="459" y="160" width="15" height="3"/></g><circle cx="466" cy="155" r="4.500" fill="#c3c5c8"/>
<g><rect x="482" y="151" width="3" height="14" fill="#2a88b5"/><path d="M487 153l5 6-5 4z" fill="#bbb"/><rect x="501" y="151" width="3" height="14" fill="#2a88b5"/><path d="M506 153l5 6-5 4z" fill="#bbb"/><rect x="523" y="151" width="3" height="14" fill="#c44"/><path d="M528 153l5 6-5 4z" fill="#bbb"/><rect x="544" y="151" width="3" height="14" fill="#888"/><path d="M549 153l5 6-5 4z" fill="#bbb"/></g>
<path d="M566 150V164L569 161 572 166 574 165 572 160 576 160Z" fill="#2a78c0"/><path d="M569 150l3 3" stroke="#c33"/>
<rect x="582" y="150" width="14" height="4" fill="#e8a33a"/><rect x="582" y="155" width="14" height="3" fill="#aaa"/><rect x="582" y="159" width="14" height="3" fill="#ccc"/><rect x="582" y="163" width="14" height="3" fill="#999"/>
<rect x="603" y="150" width="14" height="16" fill="#1f7fa8"/><rect x="606" y="153" width="12" height="13" fill="#f3b93b"/><rect x="609" y="159" width="5" height="5" fill="#c22"/>
<rect x="622" y="152" width="16" height="14" rx="3" fill="#5fa8b0"/><circle cx="630" cy="155" r="4" fill="#f3cf6c"/><rect x="626" y="160" width="8" height="5" fill="#d9a33a"/>
<circle cx="651" cy="155" r="6" fill="#e8a33a"/><path d="M644 157 652 163 658 157 658 165 644 165Z" fill="#3f94b8"/><circle cx="653" cy="154" r="2" fill="#c33"/>
<circle cx="672" cy="159" r="7" fill="none" stroke="#9a9da2" stroke-width="1.500"/><path d="M672 153v7" stroke="#9a9da2"/>
<path d="M687 166V150H697V166" fill="none" stroke="#9a9da2" stroke-dasharray="3 1.500"/><rect x="707" y="150" width="11" height="16" fill="#d9dadd"/><rect x="708" y="154" width="9" height="9" fill="#555"/>
<g stroke="#a0a3a8" fill="none" stroke-width="1.400">
<path d="M865 150V164L868 161 871 166 874 165 871 160 875 160Z" fill="#b6b8bc" stroke-width=".6"/>
<circle cx="889" cy="158" r="5" stroke-dasharray="2 1.500"/><circle cx="889" cy="158" r="2" fill="#aaa"/><circle cx="910" cy="158" r="6.500"/><path d="M908 154l5 4-5 4z" fill="#aaa"/>
<path d="M923 153h2M930 155h2M926 160h2M935 153h2M932 163h2" stroke-width="2"/>
<path d="M942 166 956 151M961 166 975 151"/><circle cx="953" cy="154" r="1.500" fill="#aaa"/><circle cx="968" cy="158" r="1.500" fill="#aaa"/>
<circle cx="989" cy="158" r="7"/><circle cx="989" cy="158" r="1.500" fill="#aaa"/><circle cx="1009" cy="158" r="7"/><path d="M1009 149v3"/>
<path d="M1022 162 1027 152 1032 165 1036 155M1043 160 1047 152 1052 164 1057 156"/><path d="M1062 166Q1064 150 1071 150 1078 150 1080 166M1066 152V166M1076 152V166"/>
<path d="M1084 166 1099 151"/><circle cx="1097" cy="153" r="1.500" fill="#aaa"/></g>
<g fill="#a9acb0"><path d="M1104 153 1113 150 1119 156 1117 164 1108 165Z"/><path d="M1124 153 1133 150 1139 156 1137 164 1128 165Z"/></g>

<!-- manager controls -->
<rect x="336" y="177" width="9" height="7" fill="none" stroke="#999"/><path d="M338 180h5" stroke="#999"/>
<path d="M356 177l9 8m0-8-9 8" stroke="#a8a8a8" stroke-width="3"/>
<path d="M179 204h6l-3 4z" fill="#333"/><path d="M352 197H369L363 205V214L358 212V205Z" fill="#1fa4cc"/>
<path d="M360 229l3-3 3 3z M360 719l3 3 3-3z" fill="#6c6c6c"/><rect x="361" y="331" width="3" height="1.500" fill="#888"/>
<path d="M36 739H45L40.500 747Z" fill="#555"/>

<!-- left column icons -->
<path d="M7 207 16 204 24 208 16 212Z" fill="#b8e3f3"/><path d="M7 207 16 212V222L7 217Z" fill="#6cc8ea"/><path d="M24 208 16 212V222L24 217Z" fill="#2c9cc6"/><path d="M12 226V234H26M21 208H29" stroke="#666" fill="none"/><rect x="21" y="220" width="7" height="6" fill="#fff" stroke="#555"/>
<rect x="13" y="257" width="9" height="6" fill="#2d8fbd"/><path d="M17 263V268M10 268H26M10 268V272M26 268V272" stroke="#555" fill="none"/><rect x="6" y="272" width="9" height="6" fill="#2d8fbd"/><rect x="20" y="272" width="9" height="6" fill="#cfe7f3" stroke="#5d9fc4" stroke-width=".6"/>
<rect x="6" y="304" width="24" height="25" fill="#fff" stroke="#2687b4"/><rect x="6" y="304" width="24" height="5" fill="#2687b4"/><path d="M11 315 18 311 25 315 25 323 18 326 11 323Z" fill="#f3c23c" stroke="#b07a18" stroke-width=".5"/><path d="M11 315 18 319 25 315M18 319V326" stroke="#c58a1c" fill="none" stroke-width=".6"/>
<rect x="5" y="354" width="25" height="25" fill="#d8f0f8" stroke="#2687b4"/><circle cx="23" cy="359" r="4.500" fill="#f3b93b"/><path d="M5 368Q12 358 18 366T30 364V379H5Z" fill="#79c7e2"/><path d="M6 372H19M16 368l6 4-6 4z" fill="#e85a25" stroke="#e85a25"/>
<path d="M5 424Q7 415 13 413A6 6 0 1 1 20 413Q25 416 27 424Z" fill="#2b93bf"/><path d="M21 405A6 6 0 1 1 25 414Q30 417 30 424H24Q23 416 19 411Z" fill="#f3a92e"/>

<!-- tree checkboxes -->
<g id="cks">
<use href="#cb" x="81" y="247" width="14" height="14"/><use href="#cb" x="81" y="266" width="14" height="14"/><use href="#cb" x="81" y="284.600" width="14" height="14"/><use href="#cb" x="81" y="303.400" width="14" height="14"/><use href="#cb" x="81" y="322.200" width="14" height="14"/><use href="#cb" x="81" y="341" width="14" height="14"/><use href="#cb" x="81" y="359.800" width="14" height="14"/><use href="#cb" x="81" y="378.600" width="14" height="14"/><use href="#cb" x="81" y="397.400" width="14" height="14"/><use href="#cb" x="81" y="416.200" width="14" height="14"/><use href="#cb" x="81" y="435" width="14" height="14"/><use href="#cb" x="81" y="453.800" width="14" height="14"/><use href="#cb" x="81" y="472.600" width="14" height="14"/><use href="#cb" x="81" y="491.400" width="14" height="14"/><use href="#cb" x="81" y="510.200" width="14" height="14"/><use href="#cb" x="81" y="529" width="14" height="14"/><use href="#cb" x="81" y="547.800" width="14" height="14"/><use href="#cb" x="81" y="566.600" width="14" height="14"/><use href="#cb" x="81" y="585.400" width="14" height="14"/><use href="#cb" x="81" y="604.200" width="14" height="14"/><use href="#cb" x="81" y="623" width="14" height="14"/><use href="#cb" x="81" y="641.800" width="14" height="14"/><use href="#cb" x="81" y="660.600" width="14" height="14"/><use href="#cb" x="81" y="679.400" width="14" height="14"/>
</g>
<use href="#plane" x="100" y="246" width="16" height="16"/><use href="#plane" x="100" y="265" width="16" height="16"/><use href="#plane" x="100" y="283.600" width="16" height="16"/>
<use href="#sk" x="100" y="302.400" width="16" height="16"/><use href="#tab" x="100" y="321.200" width="16" height="16"/><use href="#fl" x="100" y="340" width="16" height="16"/><use href="#fl" x="100" y="358.800" width="16" height="16"/><use href="#fl" x="100" y="377.600" width="16" height="16"/><use href="#un" x="100" y="396.400" width="16" height="16"/><use href="#sk" x="100" y="415.200" width="16" height="16"/><use href="#ex" x="100" y="434" width="16" height="16"/><use href="#fo" x="100" y="452.800" width="16" height="16"/><use href="#fi" x="100" y="471.600" width="16" height="16"/><use href="#sk" x="100" y="490.400" width="16" height="16"/><use href="#ho" x="100" y="509.200" width="16" height="16"/><use href="#sk" x="100" y="528" width="16" height="16"/><use href="#ex" x="100" y="546.800" width="16" height="16"/><use href="#fi" x="100" y="565.600" width="16" height="16"/><use href="#pu" x="100" y="584.400" width="16" height="16"/><use href="#fi" x="100" y="603.200" width="16" height="16"/><use href="#fl" x="100" y="622" width="16" height="16"/><use href="#st" x="100" y="640.800" width="16" height="16"/><use href="#fi" x="100" y="659.600" width="16" height="16"/><use href="#nc" x="100" y="678.400" width="16" height="16"/>
<path d="M68 681l4 5-4 5" fill="none" stroke="#999" stroke-width="2"/><path d="M81 705.500 88 699V702.500H97V708.500H88V712Z" fill="#f5183f"/>
<svg x="0" y="0" width="1600" height="729" overflow="hidden"><use href="#cb" x="81" y="717.500" width="14" height="14"/><use href="#flg" x="100" y="716" width="16" height="16"/></svg>

<!-- replay icons -->
<g fill="#1fa9cf" stroke="#14688c" stroke-width=".8">
<path d="M104 765V785L121 775Z"/><path d="M137 765V785L153 775Z"/><rect x="154" y="765" width="3" height="20"/>
<path d="M178 766V785L192 775.500Z"/><path d="M216 766V785L228 775.500Z"/><rect x="228" y="766" width="2.500" height="19"/>
<path d="M247 765V785L258 775Z"/><path d="M258 765V785L269 775Z"/><path d="M300 765V785L283 775Z"/><path d="M308 765V785L296 775Z"/>
</g>
<path d="M175 763Q168 775 175 788M195 763Q201 775 195 788M212 763Q205 775 212 788M233 763Q239 775 233 788" fill="none" stroke="#2d7ea8" stroke-width="2"/>
<g fill="none"><path d="M120 812 126 804M132 800 138 794" stroke="#2d7ea8" stroke-width="2.500"/><ellipse cx="124" cy="816" rx="5" ry="3" stroke="#2d7ea8" stroke-width="1.500" transform="rotate(-45 124 816)"/><ellipse cx="134" cy="802" rx="5" ry="3" stroke="#888" stroke-width="1.500" transform="rotate(-45 134 802)"/></g>
<path d="M175 799 177 801 160 820 155 822 156 817Z" fill="#f3b13a" stroke="#9b6a1a" stroke-width=".6"/><path d="M174 798 177 801" stroke="#c33" stroke-width="2"/>
<path d="M191 806 198 799V814L191 822Z" fill="#cfe1ee" stroke="#2d7ea8"/><path d="M191 822H212L215 814H198Z" fill="#f3d27c" stroke="#555"/><path d="M200 803Q210 799 212 810" fill="none" stroke="#c33" stroke-width="2"/><path d="M208 809h7l-3 4z" fill="#c33"/>
<path d="M231 801 246 820M246 801 231 820" stroke="#b81d1d" stroke-width="4"/>
<rect x="265" y="798" width="22" height="22" fill="#1ea6cf" stroke="#147aa0"/>

<!-- viewport tab controls -->
<path d="M1262 180h12M1268 174v12" stroke="#7d6a3c" stroke-width="2.500"/><path d="M1538 176v9l-5-4.500z" fill="#222"/><path d="M1549 176v9l5-4.500z" fill="#bbb"/><path d="M1565 180.500h10M1570 176v10" stroke="#aaa" stroke-width="1.500"/><path d="M1589 178h8M1589 181h8M1590 183h6l-3 3z" stroke="#aaa" fill="#aaa"/>

<!-- viewport toolbar -->
<rect x="711" y="194" width="10" height="13" fill="#fff" stroke="#3d92bd" stroke-width="1.500"/><path d="M706 201h9M709 198l-3 3 3 3" stroke="#d22" stroke-width="1.500" fill="none"/>
<path d="M730 193v14M730 207H740" stroke="#3a9a3c" stroke-width="1.400" fill="none"/><path d="M734 198h6M733 202h7" stroke="#2687b4"/><circle cx="734" cy="194" r="2" fill="#e8a33a"/>
<path d="M750 198h6l-3 4zM829 198h6l-3 4zM865 198h6l-3 4zM900 198h6l-3 4zM936 198h6l-3 4zM971 198h6l-3 4zM1029 198h6l-3 4zM1065 198h6l-3 4zM1143 198h6l-3 4z" fill="#222"/>
<path d="M767 207 778 195 779 198 770 208Z" fill="#f0f0f0" stroke="#c33"/>
<path d="M787 197 794 193 802 197 795 201Z" fill="#f3d24c"/><path d="M787 197 795 201V208L787 204Z" fill="#f3b93b"/><path d="M795 201 802 197V204L795 208Z" fill="#1f8fbc"/>
<path d="M809 196 816 192 824 196V204L816 209 809 205Z" fill="#1f8fbc"/><path d="M809 196 816 200 824 196 816 192Z" fill="#a4dff2"/>
<path d="M844 193H854V203" fill="none" stroke="#e8a33a"/><circle cx="850" cy="202" r="7" fill="none" stroke="#2d7ea8"/>
<path d="M878 194 885 192 892 196V207L885 209 878 206Z" fill="#f3a92e"/><path d="M885 192 892 196V207L885 209Z" fill="#1f8fbc"/>
<rect x="916" y="191" width="14" height="20" fill="#fff" stroke="#2d7ea8"/><circle cx="923" cy="200" r="4.500" fill="#fbe08c" stroke="#a3801c"/>
<circle cx="959" cy="201" r="6" fill="none" stroke="#d22"/><path d="M959 193v16M951 201h16" stroke="#1f4f8f"/>
<rect x="988" y="193" width="12" height="17" fill="#fff" stroke="#8dc4de"/><circle cx="996" cy="200" r="1.500" fill="#1f7fa8"/>
<path d="M1010 193v14M1024 193v14" stroke="#2687b4" stroke-width="1.500"/><path d="M1010 200h14" stroke="#c33"/><path d="M1009 209h16" stroke="#c33" stroke-width="2"/>
<rect x="1042" y="192" width="17" height="14" fill="#5d6e80" stroke="#888"/><rect x="1045" y="206" width="11" height="3" fill="#777"/>
<rect x="1079" y="192" width="17" height="18" fill="#000"/><rect x="1100" y="190" width="16" height="23" fill="#b8e3f3" stroke="#9cc"/>
<path d="M1122 196 1130 192 1138 197 1131 206 1123 202Z" fill="#5fb8a0" stroke="#3a88a8"/>
<circle cx="1172" cy="202" r="2.500" fill="#e9dd6a"/><circle cx="1179" cy="202" r="3" fill="#e9dd6a" stroke="#999" stroke-width=".5"/>
<path d="M1267 200h6l-3 4z" fill="#333"/>

<!-- the part -->
<g stroke="#4a3018" stroke-width=".6" stroke-linejoin="round">
<!-- plate -->
<path d="M890,338 L1187,492 L1187,532 L1150,568 L1100,612 L1082,648 Q1078,653 1072,649 L1035,630 L1049,613 L797,481 L792,476 L787,480 L772,493 L733,472 Q727,466 727,458 L777,418 L835,367 L883,328 Q885,335 890,338Z" fill="#956b47"/>
<!-- flange -->
<path d="M775,518 L1028,648 L1023,800 L772,670Z" fill="#67462a"/>
<path d="M775,518 Q776,500 795,481 L1047,611 Q1037,620 1035,627 Q1030,637 1028,648Z" fill="url(#bend)" stroke-width=".5"/>
<path d="M1049,613 1041,617 1035,627" fill="none" stroke="#fff" stroke-width="3"/>
<ellipse cx="898.500" cy="659" rx="49.500" ry="31" transform="rotate(53 898.500 659)" fill="#8f6744"/>
<ellipse cx="900" cy="657.500" rx="49" ry="30" transform="rotate(53 900 657.500)" fill="#fff" stroke-width=".4"/>
<!-- left strip -->
<path d="M668,384 Q669,376 682,371 L793,267 Q803,258 813,258 Q826,258 843,268 L816,293 L815,308 L766,346 L707,388 L708,405 L703,411 Q700,412 696,410 L670,392 Q667,390 668,384Z" fill="#956b47"/>
<ellipse cx="693.500" cy="383.500" rx="12.500" ry="8" fill="#fff" transform="rotate(-3 693.500 383.500)"/>
<ellipse cx="816.500" cy="275.500" rx="12.500" ry="8" fill="#fff" transform="rotate(-3 816.500 275.500)"/>
<!-- walls -->
<path d="M733,403 L777,367 L777,418 L730,458 Q726,452 727,447 L728,412 Q729,405 733,403Z" fill="#614227"/>
<path d="M838,310 L883,272 L883,328 L835,367 L835,320Z" fill="#614227"/>
<path d="M708,405 L707,388 Q717,382 727,387 Q733,392 734,403 Q725,393 718,394 Q713,396 712,405Z" fill="#5e3f22"/>
<path d="M816,308 L815,296 Q818,292 826,291 Q835,293 838,310 Q832,297 826,298 Q820,300 819,308Z" fill="#5e3f22"/>
<path d="M707,388 Q717,381 727,385 Q733,390 734,403 L777,367 Q776,352 765,346 Q757,343 752,348Z" fill="url(#hump)"/>
<path d="M815,296 Q818,290 826,289 Q835,292 838,310 L883,272 Q884,262 876,254 Q870,250 862,252Z" fill="url(#hump)"/>
<!-- right tab -->
<path d="M1187,488 Q1192,486 1200,487 Q1209,490 1210,500 L1210,515 L1187,532Z" fill="#5e3f22"/>
<path d="M1103,610 L1150,572 L1210,517 L1255,478 Q1256,484 1263,488 L1290,501 Q1294,505 1293,516 L1167,633 Q1160,640 1150,640 Q1140,640 1130,634 L1117,627 Q1108,622 1103,610Z" fill="#956b47"/>
<ellipse cx="1147" cy="620" rx="12.500" ry="8" fill="#fff" transform="rotate(-3 1147 620)"/>
<ellipse cx="1269" cy="512" rx="12.500" ry="8" fill="#fff" transform="rotate(-3 1269 512)"/>
<path d="M1187,488 Q1192,484 1200,485 Q1209,488 1210,500 L1210,515 L1255,478 L1255,457 Q1252,449 1243,446 Q1238,445 1236,447Z" fill="url(#hump)"/>
<path d="M1187,490 Q1193,488 1200,489 Q1207,493 1208,503 L1208,514 L1187,532Z" fill="#5e3f22"/>
<path d="M1150,568 L1207,517 L1209,519 L1152,571Z" fill="#6a4728" stroke="none"/>
<path d="M1080,590 Q1086,585 1092,586 Q1098,590 1100,597 L1099,612 Q1104,618 1108,622 L1082,648 L1079,645Z" fill="#5e3f22"/>
<path d="M1079,585 Q1085,580 1092,580 Q1101,584 1103,598 L1150,560 Q1150,550 1140,540 Q1133,538 1127,540Z" fill="url(#hump)"/>
</g>
<g fill="none" stroke="#4a3018" stroke-width=".5" opacity=".85">
<path d="M740,472 L890,338"/>
<path d="M1263,488 L1120,618"/><path d="M1210,500 L1255,467"/><path d="M1103,610 L1150,572"/><path d="M1103,598 L1150,560"/>
<path d="M813,460 L891,392 Q896,389 900,392 L1143,518 Q1147,522 1145,525 L1072,592 Q1066,596 1060,593 L820,470 Q811,465 813,460Z"/>
<path d="M820,467 L895,403 L1137,528 L1064,593"/>
</g>
<path d="M818,461 L894,397 L1140,522" fill="none" stroke="#75502e" stroke-width="2.500" opacity=".7"/>
<path d="M893,393a4,3 0 0 1 5,8" fill="#7a5330"/>

<!-- triad -->
<path d="M447 744 447.500 710" stroke="#7a7cf0" stroke-width="1.500"/><path d="M447.500 702 444.500 712H450.500Z" fill="#1212e0"/>
<path d="M447 744 475 719" stroke="#4ac64a"/><path d="M481 714 470 719 474 724Z" fill="#0c6a0c"/>
<path d="M447 744 486 765" stroke="#f04040"/><path d="M492 768 483 761 481 767Z" fill="#f04040"/>
<text x="450" y="699" text-anchor="middle" font-family="'Liberation Sans',sans-serif" font-size="17" fill="#1414e6">Z</text>
<text x="489" y="712" text-anchor="middle" font-family="'Liberation Sans',sans-serif" font-size="17" fill="#22b422">Y</text>
<text x="502" y="774" text-anchor="middle" font-family="'Liberation Sans',sans-serif" font-size="17" fill="#f01414">X</text>

<!-- status icons -->
<rect x="1157" y="834" width="15" height="14" fill="#fff" stroke="#4a7fc0" stroke-width="1.400"/><rect x="1163" y="838" width="7" height="2" fill="#555"/><rect x="1165.500" y="840" width="2.500" height="7" fill="#d22"/>
<rect x="1185" y="834" width="15" height="10" fill="#38b4d0" stroke="#888"/><rect x="1189" y="844" width="7" height="3" fill="#555"/>
<rect x="1213" y="833" width="14" height="16" fill="#fff" stroke="#4a7fc0"/><rect x="1213" y="833" width="14" height="3" fill="#4a7fc0"/><path d="M1215 839h10M1215 842h10M1215 845h8" stroke="#666"/>
</svg>
</body></html>
